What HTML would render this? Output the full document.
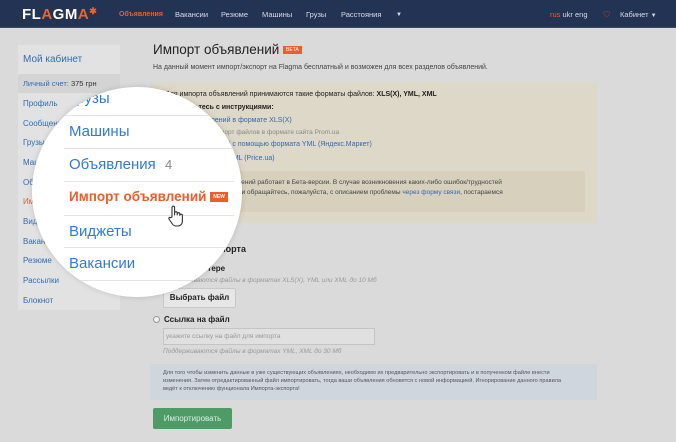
<!DOCTYPE html>
<html><head><meta charset="utf-8"><style>
*{margin:0;padding:0;box-sizing:border-box}
body{width:676px;height:442px;overflow:hidden;background:#dadada;font-family:"Liberation Sans","Noto Sans CJK SC",sans-serif;position:relative;color:#333}
.a{position:absolute;white-space:nowrap}
#hdr{position:absolute;left:0;top:0;width:676px;height:28px;background:#233353;border-bottom:1px solid #3a4a66}
.nav{font-size:7.5px;color:#d8dde8;top:10px;line-height:9px}
.sb{font-size:8px;color:#2f6db5;left:23px}
.t{font-size:7.5px;color:#444}
.lk{color:#3569b0}
#circ{position:absolute;left:32px;top:87px;width:210px;height:210px;border-radius:50%;background:#fff;overflow:hidden;box-shadow:0 0 6px rgba(0,0,0,.15)}
.ci{position:absolute;left:37px;font-size:15px;color:#2f7bd6;white-space:nowrap}
.cl{position:absolute;left:32px;width:170px;height:1px;background:#e4e4e4}
</style></head><body>
<div id="hdr"></div>
<div class="a" style="left:22px;top:6px;font-size:15px;font-weight:bold;color:#fff;letter-spacing:.5px">FL<span style="color:#f0622b">A</span>GM<span style="color:#f0622b">A</span><span style="color:#f0622b;font-size:9px;vertical-align:top">✱</span></div>
<div class="a nav" style="left:119px;color:#e8602c;font-weight:bold;font-size:7px">Объявления</div>
<div class="a nav" style="left:175px">Вакансии</div>
<div class="a nav" style="left:221px">Резюме</div>
<div class="a nav" style="left:262px">Машины</div>
<div class="a nav" style="left:306px">Грузы</div>
<div class="a nav" style="left:341px">Расстояния</div>
<div class="a nav" style="left:396px;font-size:6px;top:11px">▼</div>
<div class="a nav" style="left:550px"><span style="color:#e8602c">rus</span> ukr eng</div>
<div class="a nav" style="left:603px;color:#e04040">♡</div>
<div class="a nav" style="left:620px">Кабинет <span style="font-size:6px">▼</span></div>

<div class="a" style="left:18px;top:45px;width:102px;height:265px;background:#e2e2e2"></div>
<div class="a sb" style="top:54px;font-size:10px">Мой кабинет</div>
<div class="a" style="left:18px;top:74px;width:102px;height:19px;background:#d4d4d4"></div>
<div class="a sb" style="top:79px;font-size:7.5px">Личный счет: <span style="color:#333">375 грн</span></div>
<div class="a sb" style="top:99px">Профиль</div>
<div class="a sb" style="top:119px">Сообщения</div>
<div class="a sb" style="top:138px">Грузы</div>
<div class="a sb" style="top:158px">Машины</div>
<div class="a sb" style="top:178px">Объявления</div>
<div class="a sb" style="top:197px;color:#e06030">Импорт</div>
<div class="a sb" style="top:217px">Виджеты</div>
<div class="a sb" style="top:237px">Вакансии</div>
<div class="a sb" style="top:256px">Резюме</div>
<div class="a sb" style="top:276px">Рассылки</div>
<div class="a sb" style="top:296px">Блокнот</div>

<div class="a" style="left:153px;top:42px;font-size:13.5px;color:#222">Импорт объявлений <span style="font-size:5px;background:#e8602c;color:#fff;padding:1px 3px;vertical-align:middle">BETA</span></div>
<div class="a t" style="left:153px;top:64px;font-size:7px">На данный момент импорт/экспорт на Flagma бесплатный и возможен для всех разделов объявлений.</div>

<div class="a" style="left:150px;top:82px;width:447px;height:141px;background:#ddd8c8"></div>
<div class="a t" style="left:165px;top:91px;color:#222;font-size:7px">Для импорта объявлений принимаются такие форматы файлов: <b>XLS(X), YML, XML</b></div>
<div class="a t" style="left:165px;top:104px;font-weight:bold;color:#222;font-size:7px">Ознакомьтесь с инструкциями:</div>
<div class="a t lk" style="left:165px;top:117px;font-size:7px">Импорт объявлений в формате XLS(X)</div>
<div class="a t" style="left:165px;top:129px;color:#888;font-size:6.5px">Поддерживаем импорт файлов в формате сайта Prom.ua</div>
<div class="a t lk" style="left:165px;top:141px;font-size:7px">Импорт объявлений с помощью формата YML (Яндекс.Маркет)</div>
<div class="a t lk" style="left:165px;top:155px;font-size:7px">Импорт в формате XML (Price.ua)</div>
<div class="a" style="left:158px;top:171px;width:427px;height:41px;background:#d6d0bc"></div>
<div class="a t" style="left:165px;top:178px;font-size:6.5px;line-height:10px">Функция импорта объявлений работает в Бета-версии. В случае возникновения каких-либо ошибок/трудностей<br>или нехватке информации обращайтесь, пожалуйста, с описанием проблемы <span class="lk">через форму связи</span>, постараемся<br>ответить на обращения.</div>

<div class="a" style="left:153px;top:244px;font-size:9px;font-weight:bold;color:#222">Способ для импорта</div>
<div class="a" style="left:164px;top:264px;font-size:8px;font-weight:bold;color:#222">На компьютере</div>
<div class="a t" style="left:163px;top:277px;font-style:italic;color:#999;font-size:6.5px">Поддерживаются файлы в форматах XLS(X), YML или XML до 10 Мб</div>
<div class="a" style="left:163px;top:288px;width:73px;height:20px;background:#e6e6e6;border:1px solid #c8c8c8;border-radius:2px;font-size:8px;font-weight:bold;color:#222;text-align:center;line-height:18px">Выбрать файл</div>
<div class="a" style="left:153px;top:316px;width:7px;height:7px;border:1px solid #999;border-radius:50%;background:#f2f2f2"></div>
<div class="a" style="left:164px;top:315px;font-size:8px;font-weight:bold;color:#222">Ссылка на файл</div>
<div class="a" style="left:163px;top:328px;width:212px;height:17px;border:1px solid #c4c4c4;background:#e0e0e0;font-size:6.5px;color:#999;padding:4px 2px">укажите ссылку на файл для импорта</div>
<div class="a t" style="left:163px;top:348px;font-style:italic;color:#999;font-size:6.5px">Поддерживаются файлы в форматах YML, XML до 30 Мб</div>
<div class="a" style="left:150px;top:364px;width:447px;height:36px;background:#d0d6de"></div>
<div class="a t" style="left:163px;top:369px;font-size:5.6px;line-height:8px;color:#555">Для того чтобы изменить данные в уже существующих объявлениях, необходимо их предварительно экспортировать и в полученном файле внести<br>изменения. Затем отредактированный файл импортировать, тогда ваши объявления обновятся с новой информацией. Игнорирование данного правила<br>ведёт к отключению фунционала Импорта-экспорта!</div>
<div class="a" style="left:153px;top:408px;width:79px;height:21px;background:#4e9b68;border-radius:2px;font-size:8px;color:#dfeee3;text-align:center;line-height:21px">Импортировать</div>

<div id="circ">
<div class="ci" style="top:3px">Грузы</div>
<div class="cl" style="top:28px"></div>
<div class="ci" style="top:36px">Машины</div>
<div class="cl" style="top:61px"></div>
<div class="ci" style="top:69px">Объявления <span style="color:#888;font-size:13px;margin-left:5px">4</span></div>
<div class="cl" style="top:94px"></div>
<div class="ci" style="top:102px;color:#ee5c2a;font-weight:bold;font-size:13.5px">Импорт объявлений <span style="font-size:5px;background:#ee5c2a;color:#fff;padding:2px 3px;vertical-align:middle">NEW</span></div>
<div class="cl" style="top:128px"></div>
<div class="ci" style="top:136px">Виджеты</div>
<div class="cl" style="top:160px"></div>
<div class="ci" style="top:168px">Вакансии</div>
<div class="cl" style="top:193px"></div>
<svg style="position:absolute;left:134px;top:117px" width="20" height="24" viewBox="0 0 20 24"><path d="M6 13V3.5a1.3 1.3 0 0 1 2.6 0V11V9a1.3 1.3 0 0 1 2.6 0v2V10a1.3 1.3 0 0 1 2.6 0v1.5a1.3 1.3 0 0 1 2.6 0V17c0 3-2 5-4.5 5H10c-2 0-3-1-4-2.5L3 15c-.7-1 .6-2.2 1.6-1.3z" fill="#fff" stroke="#333" stroke-width="1.1" stroke-linejoin="round"/></svg>
</div>
</body></html>
